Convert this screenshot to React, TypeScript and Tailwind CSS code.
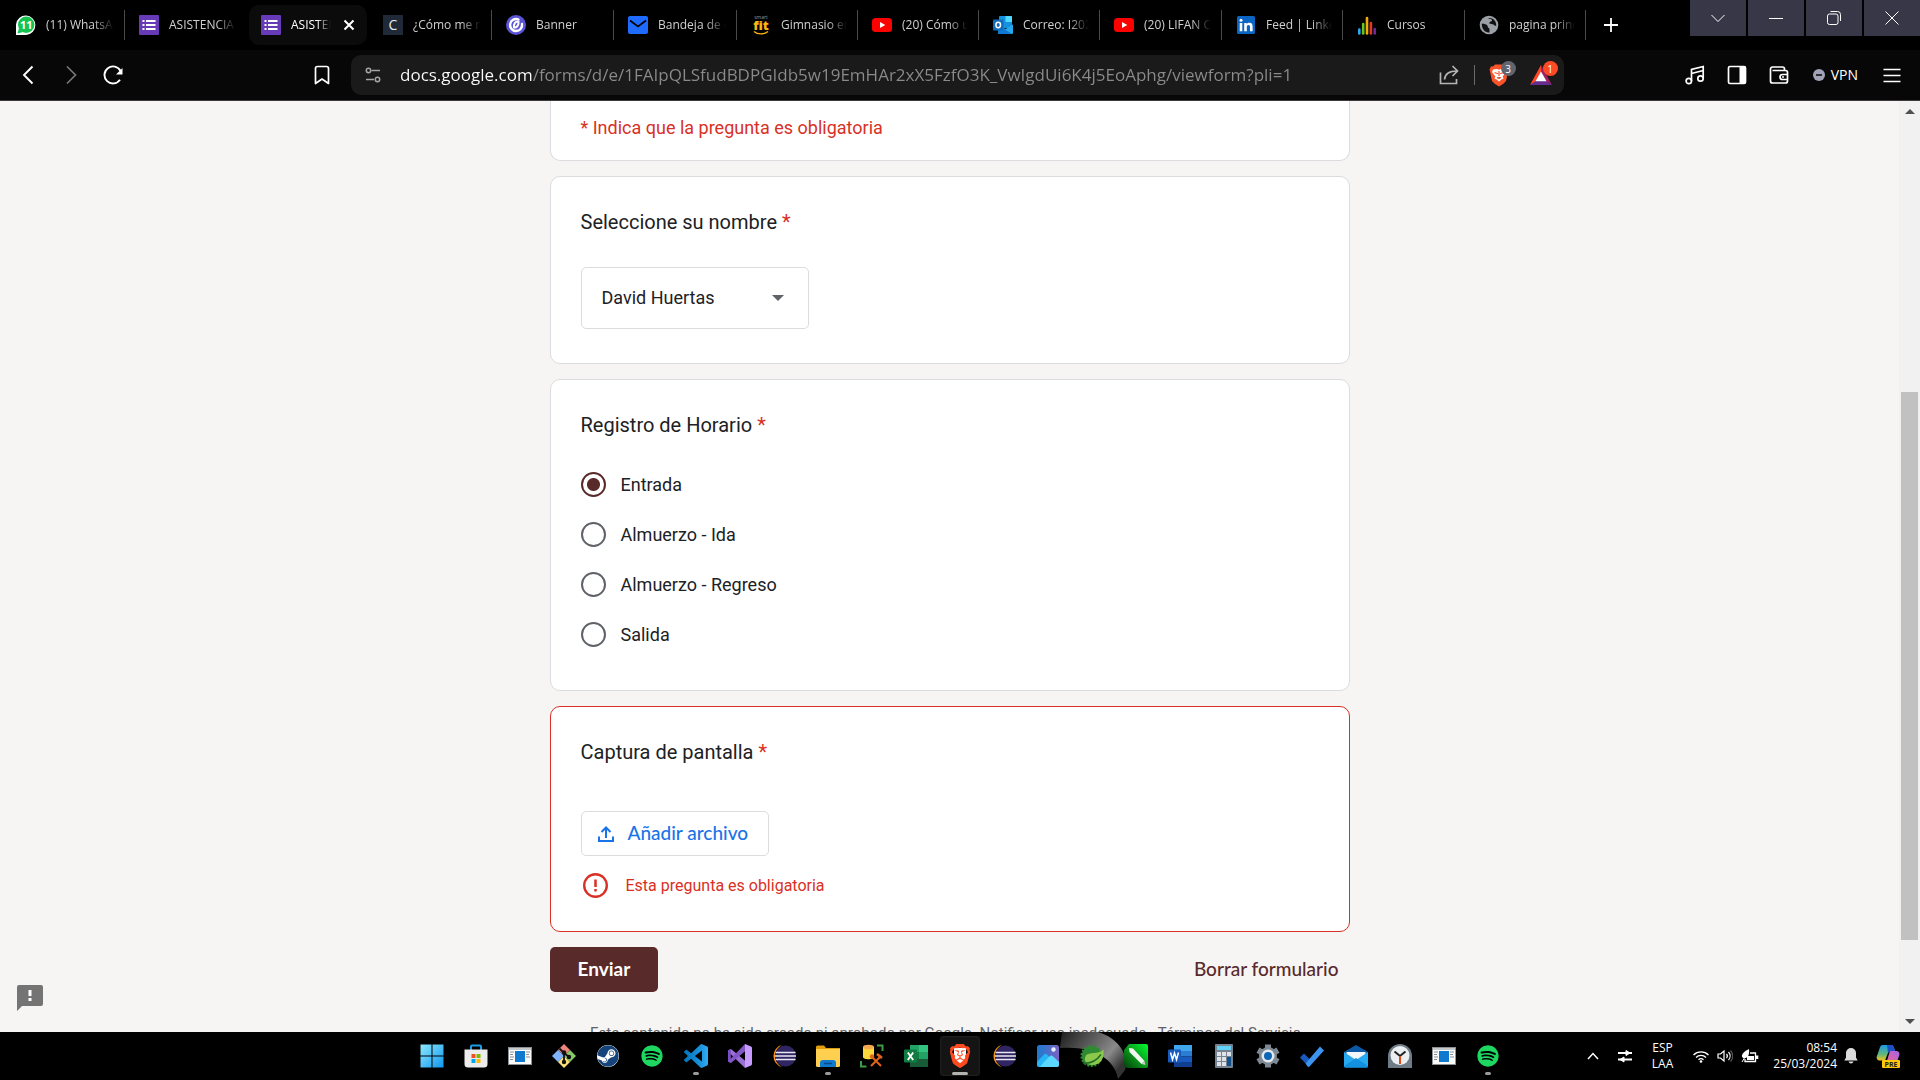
import { useState, type ReactNode } from "react";
import { FaSpotify, FaSteam } from "react-icons/fa";
import { SiBrave } from "react-icons/si";

/* ---------- tab favicons ---------- */

const WhatsAppTab = () => (
  <svg viewBox="0 0 20 20" className="size-5">
    <path d="M0 20V9.500A9.700 9.700 0 1 1 10 20Z" fill="#fff" />
    <circle cx="10.200" cy="9.800" r="8.200" fill="#16c350" />
    <path d="M1.500 18.500 3 13l4 4Z" fill="#16c350" />
    <text x="10.200" y="14" fontSize="11" fontWeight="700" textAnchor="middle" fill="#fff" fontFamily="Open Sans">11</text>
  </svg>
);

const FormsTab = () => (
  <svg viewBox="0 0 20 20" className="size-5">
    <rect width="20" height="20" rx="1" fill="#673ab7" />
    <path d="M3.500 5h2v2h-2zM3.500 9h2v2h-2zM3.500 13h2v2h-2zM7 5h9.500v2H7zM7 9h9.500v2H7zM7 13h9.500v2H7z" fill="#fff" />
  </svg>
);

const ComoTab = () => (
  <span className="flex size-5 items-center justify-center bg-[#1f2937] text-sm leading-5 text-gray-200">C</span>
);

const BannerTab = () => (
  <svg viewBox="0 0 20 20" className="size-5">
    <circle cx="10" cy="10" r="10" fill="#5a55d6" />
    <path d="M12.500 4.500A6 6 0 1 0 16 9" fill="none" stroke="#fff" strokeWidth="2.400" strokeLinecap="round" />
    <path d="M8 12.500c3 .5 5-3 4.500-6C9.500 6 7.500 8.500 8 12.500Z" fill="none" stroke="#fff" strokeWidth="2" />
  </svg>
);

const MailTab = () => (
  <svg viewBox="0 0 20 20" className="size-5">
    <rect y="1" width="20" height="18" rx="2" fill="#1f6bff" />
    <path d="m2 5.500 8 6 8-6" fill="none" stroke="#000" strokeWidth="1.600" />
  </svg>
);

const FitTab = () => (
  <svg viewBox="0 0 20 20" className="size-5">
    <text x="10" y="3.500" fontSize="5" textAnchor="middle" fill="#9a9a9a" fontFamily="Open Sans">smart</text>
    <text x="10" y="15" fontSize="13" fontWeight="800" textAnchor="middle" fill="#fbb615" fontFamily="Open Sans">fit</text>
    <path d="M3 16.500c3.500 3.200 10.500 3.200 14 0" fill="none" stroke="#fbb615" strokeWidth="1.400" />
  </svg>
);

const YouTubeTab = () => (
  <svg viewBox="0 0 20 20" className="size-5">
    <rect y="3" width="20" height="14" rx="3.500" fill="#f00" />
    <path d="m8 7 5.300 3L8 13Z" fill="#fff" />
  </svg>
);

const OutlookTab = () => (
  <svg viewBox="0 0 20 20" className="size-5">
    <rect x="6" y="1" width="13" height="12" rx="1" fill="#1490df" />
    <path d="M12.500 1H18a1 1 0 0 1 1 1v5h-6.500z" fill="#50d9ff" />
    <path d="M5 9.500 12.500 14 20 9.500V18a1 1 0 0 1-1 1H6a1 1 0 0 1-1-1Z" fill="#28a8ea" />
    <path d="M5 10v8a1 1 0 0 0 1 1h13Z" fill="#0f78d4" />
    <rect y="4.500" width="10.500" height="11" rx="1" fill="#0f6cbd" />
    <ellipse cx="5.200" cy="10" rx="2.300" ry="2.700" fill="none" stroke="#fff" strokeWidth="1.500" />
  </svg>
);

const CursosTab = () => (
  <svg viewBox="0 0 20 20" className="size-5">
    <g strokeWidth="2.600" strokeLinecap="round">
      <path d="M2.300 14.500v4" stroke="#2aa8f2" />
      <path d="M6.200 9v9.500" stroke="#66c61c" />
      <path d="M10 3v15.500" stroke="#f5a80b" />
      <path d="M13.900 8v10.500" stroke="#e5391f" />
      <path d="M17.700 14v4.500" stroke="#6b2aa0" />
    </g>
  </svg>
);

const GlobeTab = () => (
  <svg viewBox="0 0 20 20" className="size-5">
    <circle cx="10" cy="10" r="9.300" fill="#9aa0a6" />
    <path d="M2.800 8.500c3 .3 5.800 1 6 3.200.1 1.300 1.700 1 1.700 2.500v3.200c-4.600.4-8-3.600-7.700-8.900ZM9 3c1.500 1.500 3.500.5 4 2.200.3 1.300-2.600 1.200-2.600 2.800 0 1.200 1.500 1 3.200 1.200 1.500.3 1.900 1.800 3.600 1.600.4-4.800-3.300-8.500-8.200-7.800Z" fill="#111" />
  </svg>
);

const LinkedInTab = () => (
  <svg viewBox="0 0 20 20" className="size-5">
    <rect x="1" y="1" width="18" height="18" rx="1.500" fill="#0a66c2" />
    <path d="M3.700 8h2.600v8.300H3.700zM8.200 8h2.500v1.200c.5-.9 1.500-1.400 2.700-1.400 2.400 0 3.200 1.500 3.200 3.900v4.600H14v-4.200c0-1.300-.3-2.100-1.500-2.100s-1.700.9-1.700 2.200v4.100H8.200z" fill="#fff" />
    <circle cx="5" cy="5.200" r="1.500" fill="#fff" />
  </svg>
);

type Tab = { title: string; icon: ReactNode; width: string; active?: boolean; bare?: boolean };

const tabs: Tab[] = [
  { title: "(11) WhatsApp", icon: <WhatsAppTab />, width: "w-[123px]" },
  { title: "ASISTENCIA", icon: <FormsTab />, width: "w-[122px]", bare: true },
  { title: "ASISTENCIA", icon: <FormsTab />, width: "w-[122px]", active: true, bare: true },
  { title: "¿Cómo me registro?", icon: <ComoTab />, width: "w-[123px]" },
  { title: "Banner", icon: <BannerTab />, width: "w-[122px]" },
  { title: "Bandeja de entrada", icon: <MailTab />, width: "w-[123px]" },
  { title: "Gimnasio en Lima", icon: <FitTab />, width: "w-[121px]" },
  { title: "(20) Cómo usar", icon: <YouTubeTab />, width: "w-[121px]" },
  { title: "Correo: I202110", icon: <OutlookTab />, width: "w-[121px]" },
  { title: "(20) LIFAN CHILE", icon: <YouTubeTab />, width: "w-[122px]" },
  { title: "Feed | LinkedIn", icon: <LinkedInTab />, width: "w-[121px]" },
  { title: "Cursos", icon: <CursosTab />, width: "w-[122px]" },
  { title: "pagina principal", icon: <GlobeTab />, width: "w-[121px]" },
];

function TabItem({ tab }: { tab: Tab }) {
  if (tab.active) {
    return (
      <div className={`${tab.width} flex h-10 shrink items-center px-0.5`}>
        <div className="flex h-10 w-full items-center rounded-[10px] bg-[#0b0b0b] pr-3 pl-3">
          <button className="flex min-w-0 flex-1 items-center gap-2.5 text-left text-white">
            <span className="shrink-0">{tab.icon}</span>
            <span className="min-w-0 flex-1 overflow-hidden whitespace-nowrap [mask-image:linear-gradient(to_right,black_65%,transparent)]">{tab.title}</span>
          </button>
          <button aria-label="Cerrar pestaña" className="ml-3 shrink-0 text-white">
            <svg viewBox="0 0 12 12" className="size-3"><path d="m1.500 1.500 9 9m0-9-9 9" stroke="currentColor" strokeWidth="2" /></svg>
          </button>
        </div>
      </div>
    );
  }
  return (
    <div className={`${tab.width} flex h-[30px] shrink items-center border-r pr-2.5 pl-3.5 ${tab.bare ? "border-transparent" : "border-[#4a4a4a]"}`}>
      <button className="flex min-w-0 flex-1 items-center gap-2.5 text-left text-[#d0d0d0]">
        <span className="shrink-0">{tab.icon}</span>
        <span className="min-w-0 flex-1 overflow-hidden whitespace-nowrap [mask-image:linear-gradient(to_right,black_70%,transparent)]">{tab.title}</span>
      </button>
    </div>
  );
}

function TabStrip() {
  const win = "flex h-9 w-14 items-center justify-center bg-[#373747] text-white";
  return (
    <div className="flex h-[50px] items-start bg-black pl-0.5 text-xs">
      <div className="flex h-[50px] min-w-0 items-center">
        {tabs.map((t, i) => <TabItem key={i} tab={t} />)}
      </div>
      <button aria-label="Nueva pestaña" className="ml-[18px] flex h-[50px] items-center text-white">
        <svg viewBox="0 0 14 14" className="size-3.5"><path d="M7 0v14M0 7h14" stroke="currentColor" strokeWidth="1.800" /></svg>
      </button>
      <div className="ml-auto flex gap-0.5">
        <button aria-label="Buscar pestañas" className={win}>
          <svg viewBox="0 0 14 14" className="size-3.5"><path d="m.5 4 6.500 6.500L13.500 4" fill="none" stroke="currentColor" /></svg>
        </button>
        <button aria-label="Minimizar" className={win}>
          <svg viewBox="0 0 14 14" className="size-3.5"><path d="M0 7.500h14" stroke="currentColor" /></svg>
        </button>
        <button aria-label="Restaurar" className={win}>
          <svg viewBox="0 0 14 14" className="size-3.5"><path d="M3.500.5h7a3 3 0 0 1 3 3v6.500" fill="none" stroke="currentColor" /><rect x=".5" y="3" width="10.500" height="10.500" rx="2" fill="none" stroke="currentColor" /></svg>
        </button>
        <button aria-label="Cerrar" className={win}>
          <svg viewBox="0 0 14 14" className="size-3.5"><path d="m.5.5 13 13m0-13-13 13" stroke="currentColor" /></svg>
        </button>
      </div>
    </div>
  );
}

function Toolbar() {
  return (
    <div className="flex h-[51px] items-center border-b border-[#3c3a3c] bg-[#070707] pr-[18px] pl-[19px] text-white">
      <button aria-label="Atrás"><svg viewBox="0 0 20 20" className="size-5"><path d="m13.500 1.500-8.500 8.500 8.500 8.500" fill="none" stroke="currentColor" strokeWidth="1.900" /></svg></button>
      <button aria-label="Adelante" className="ml-[22px] text-[#777]"><svg viewBox="0 0 20 20" className="size-5"><path d="m6 1.500 8.500 8.500L6 18.500" fill="none" stroke="currentColor" strokeWidth="1.700" /></svg></button>
      <button aria-label="Recargar" className="ml-[22px]">
        <svg viewBox="0 0 20 20" className="size-5"><path d="M17 14.700A8.500 8.500 0 1 1 17.500 6" fill="none" stroke="currentColor" strokeWidth="1.900" /><path d="M19.500 3v6.500H13Z" fill="currentColor" /></svg>
      </button>
      <button aria-label="Guardar en marcadores" className="ml-[189px]">
        <svg viewBox="0 0 20 20" className="size-5"><path d="M3.500 18.500V3.500a2 2 0 0 1 2-2h9a2 2 0 0 1 2 2v15L10 14Z" fill="none" stroke="currentColor" strokeWidth="1.700" strokeLinejoin="round" /></svg>
      </button>
      <div className="ml-[19px] flex h-10 min-w-0 flex-1 items-center rounded-[10px] bg-[#1a1a1a] pl-3.5">
        <svg viewBox="0 0 16 16" className="size-4 shrink-0 text-[#a5a5a8]"><g fill="none" stroke="currentColor" strokeWidth="1.500"><circle cx="3.500" cy="3.500" r="2.200" /><path d="M6.500 3.500H15M1 12.500h8" /><circle cx="12.500" cy="12.500" r="2.200" /></g></svg>
        <input
          aria-label="Dirección"
          defaultValue="docs.google.com/forms/d/e/1FAIpQLSfudBDPGIdb5w19EmHAr2xX5FzfO3K_VwIgdUi6K4j5EoAphg/viewform?pli=1"
          className="ml-[19px] min-w-0 flex-1 bg-[linear-gradient(to_right,#fff_132px,#8b8b8b_132px)] bg-clip-text text-[17px] text-transparent outline-none"
        />
        <svg viewBox="0 0 20 20" className="size-5 shrink-0 text-[#b5b5b5]"><path d="M1.500 7.500v11h16V14" fill="none" stroke="currentColor" strokeWidth="1.700" /><path d="M5.500 14.500c.5-5.500 4-8.500 12.500-8.500M13.500 1l5 5-5 5" fill="none" stroke="currentColor" strokeWidth="1.700" /></svg>
        <span className="mr-3.5 ml-[15px] h-5 w-px shrink-0 bg-[#6a6a6a]" />
        <button aria-label="Brave Shields" className="relative h-6 w-5 shrink-0">
          <svg viewBox="0 0 20 24" className="h-6 w-5">
            <path d="M6 1.500h8l2 2 2-.3 1.500 3.300-.5 2L17 18l-3 3-4 2.500L6 21l-3-3L1 8.500l-.5-2L2 3.200l2 .3Z" fill="#fb542b" />
            <path d="M4 6.500 8 6l2 .8L12 6l4 .5 1 2.500-3.300 4.500.8 2-2 1-2.500 2-2.500-2-2-1 .8-2L3 9Z" fill="#fff" />
            <path d="M5.500 9.500 9 10.800M14.500 9.500 11 10.800M8 14.500l2 1 2-1M10 8v5" stroke="#fb542b" strokeWidth="1.200" />
          </svg>
          <span className="absolute -top-0.5 left-3 flex size-[15px] items-center justify-center rounded-full bg-[#62656f] text-[10px] leading-none">3</span>
        </button>
        <button aria-label="Brave Rewards" className="relative mr-[11px] ml-5 h-6 w-6 shrink-0">
          <svg viewBox="0 0 24 24" className="size-6"><path d="M12 2 1 22l6-3.500L12 9Z" fill="#ff4724" /><path d="m12 2 11 20-6-3.500L12 9Z" fill="#9e1f63" /><path d="m1 22 6-4h10l6 4Z" fill="#662d91" /><path d="m12 8.500 5.500 9.800h-11Z" fill="#fff" /></svg>
          <span className="absolute -top-0.5 left-3.5 flex size-[15px] items-center justify-center rounded-full bg-[#ff4a26] text-[10px] leading-none">1</span>
        </button>
      </div>
      <button aria-label="Música" className="ml-[121px]"><svg viewBox="0 0 20 20" className="size-5"><g fill="none" stroke="currentColor" strokeWidth="1.700"><circle cx="3.800" cy="16" r="2.700" /><circle cx="15.500" cy="13.500" r="2.700" /><path d="M6.500 16V4.500l11.700-3v12M6.500 8.500l11.700-3" /></g></svg></button>
      <button aria-label="Barra lateral" className="ml-[22px]"><svg viewBox="0 0 20 20" className="size-5"><rect x="1.500" y="1.500" width="17" height="17" rx="1.500" fill="none" stroke="currentColor" strokeWidth="1.700" /><path d="M12.500 1.500h6v17h-6z" fill="currentColor" /></svg></button>
      <button aria-label="Cartera" className="ml-[22px]"><svg viewBox="0 0 20 20" className="size-5"><g fill="none" stroke="currentColor" strokeWidth="1.700" strokeLinejoin="round"><path d="M15.500 5.500V4a2 2 0 0 0-2-2h-10a2 2 0 0 0-2 2v12a2 2 0 0 0 2 2h13a2 2 0 0 0 2-2V7.500a2 2 0 0 0-2-2h-13" /><path d="M18.500 9.500h-5a2.500 2.500 0 0 0 0 5h5" /></g><circle cx="14" cy="12" r="1" fill="currentColor" /></svg></button>
      <button className="ml-6 flex items-center gap-1.5 text-sm"><svg viewBox="0 0 12 12" className="size-3"><circle cx="6" cy="6" r="6" fill="#a1a2b8" /><path d="M3 6h6" stroke="#111" strokeWidth="1.600" /></svg>VPN</button>
      <button aria-label="Menú" className="ml-6"><svg viewBox="0 0 20 20" className="size-5"><path d="M1.500 4.500h17M1.500 10.500h17M1.500 16.500h17" stroke="currentColor" strokeWidth="1.700" /></svg></button>
    </div>
  );
}

/* ---------- form ---------- */

const Req = () => <span className="text-[#d93025]">*</span>;

function Card({ title, error, children, id }: { title: string; error?: boolean; children: ReactNode; id: string }) {
  return (
    <section aria-labelledby={id} className={`mt-[15px] rounded-[10px] border bg-white px-[30px] pt-[30px] ${error ? "border-[#d93025]" : "border-[#dadce0]"}`}>
      <h2 id={id} className="text-xl leading-[30px] font-normal text-[#202124]">{title} <Req /></h2>
      {children}
    </section>
  );
}

const options = ["Entrada", "Almuerzo - Ida", "Almuerzo - Regreso", "Salida"];

function FormPage() {
  const [time, setTime] = useState("Entrada");
  return (
    <main className="flex min-h-0 flex-1 overflow-hidden bg-[#f6f5f4] font-['Roboto',sans-serif]">
      <div className="relative min-w-0 flex-1 overflow-hidden">
        <form className="mx-auto max-w-[800px]" onSubmit={(e) => e.preventDefault()}>
          <div className="rounded-b-[10px] border border-t-0 border-[#dadce0] bg-white px-[30px] pt-[15px] pb-5 text-lg leading-6 text-[#d93025]">
            * Indica que la pregunta es obligatoria
          </div>

          <Card id="q-nombre" title="Seleccione su nombre">
            <div className="mt-[30px] mb-[34px] grid w-[228px] items-center">
              <select aria-labelledby="q-nombre" className="col-start-1 row-start-1 h-[62px] appearance-none rounded-[5px] border border-[#dadce0] bg-white px-5 text-lg text-[#202124]">
                <option>David Huertas</option>
              </select>
              <svg viewBox="0 0 12 6" className="pointer-events-none col-start-1 row-start-1 mr-[25px] h-1.5 w-3 justify-self-end"><path d="M0 0h12L6 6Z" fill="#5f6368" /></svg>
            </div>
          </Card>

          <Card id="q-horario" title="Registro de Horario">
            <div role="radiogroup" aria-labelledby="q-horario" className="mt-8 mb-[43px] flex flex-col items-start gap-[25px]">
              {options.map((o) => (
                <label key={o} className="flex h-[25px] items-center gap-[15px] text-lg leading-6 text-[#202124]">
                  <input
                    type="radio"
                    name="horario"
                    checked={time === o}
                    onChange={() => setTime(o)}
                    className="size-[25px] appearance-none rounded-full border-2 border-[#5f6368] checked:border-[#582a2a] checked:bg-[radial-gradient(circle,#582a2a_6px,transparent_7px)]"
                  />
                  {o}
                </label>
              ))}
            </div>
          </Card>

          <Card id="q-captura" title="Captura de pantalla" error>
            <button className="mt-11 flex h-[45px] items-center gap-3.5 rounded-[5px] border border-[#dadce0] pr-5 pl-4 font-['Lato',sans-serif] text-[19px] font-medium text-[#1a73e8]">
              <svg viewBox="0 0 16 16" className="size-4"><path d="M1 10.500V15h14v-4.500M8 12V1.800M3.500 6 8 1.500 12.500 6" fill="none" stroke="currentColor" strokeWidth="2" /></svg>
              Añadir archivo
            </button>
            <div role="alert" className="mt-[17px] mb-[33px] flex h-[25px] items-center gap-[18px] pl-0.5 text-base text-[#d93025]">
              <svg viewBox="0 0 25 25" className="size-[25px]"><circle cx="12.500" cy="12.500" r="11.300" fill="none" stroke="currentColor" strokeWidth="2.400" /><path d="M12.500 6.500v7.500M12.500 16v2.500" stroke="currentColor" strokeWidth="2.500" /></svg>
              Esta pregunta es obligatoria
            </div>
          </Card>

          <div className="mt-[15px] flex h-[45px] items-center justify-between font-['Lato',sans-serif] text-[19px]">
            <button className="h-[45px] rounded-[5px] bg-[#582a2a] px-7 font-bold text-white">Enviar</button>
            <button type="button" className="pr-[11px] font-medium text-[#582a2a]">Borrar formulario</button>
          </div>

          <p className="mx-auto mt-[31px] max-w-[740px] text-center text-[15px] leading-5 text-[#5f6368]">
            Este contenido no ha sido creado ni aprobado por Google. <a href="#abuso">Notificar uso inadecuado</a> - <a href="#terminos">Términos del Servicio</a> -{" "}
            <a href="#privacidad">Política de Privacidad</a>
          </p>
        </form>
        <button aria-label="Informar de un problema a Google" className="absolute bottom-[21px] left-[17px]">
          <svg viewBox="0 0 26 26" className="size-[26px]"><path d="M2 0h22a2 2 0 0 1 2 2v17a2 2 0 0 1-2 2H5l-5 5V2a2 2 0 0 1 2-2Z" fill="#747474" /><path d="M11.500 5h3v6h-3zM11.500 13h3v3h-3z" fill="#fff" /></svg>
        </button>
      </div>
      <div aria-hidden="true" className="flex w-[21px] flex-col items-center bg-[#f1f1f1]">
        <svg viewBox="0 0 10 5" className="mt-2 h-[5px] w-2.5"><path d="M0 5h10L5 0Z" fill="#505050" /></svg>
        <div className="flex min-h-0 w-[17px] flex-1 flex-col">
          <div className="flex-[277]" />
          <div className="flex-[545] bg-[#c1c1c1]" />
          <div className="flex-[79]" />
        </div>
        <svg viewBox="0 0 10 5" className="mb-2 h-[5px] w-2.5"><path d="M0 0h10L5 5Z" fill="#505050" /></svg>
      </div>
    </main>
  );
}

/* ---------- taskbar ---------- */

const WindowsIcon = () => (
  <svg viewBox="0 0 24 24" className="size-6">
    <defs><linearGradient id="win" x1="0" y1="0" x2="1" y2="1"><stop offset="0" stopColor="#8be9ff" /><stop offset="1" stopColor="#1196ee" /></linearGradient></defs>
    <path d="M.5.500h11v11H.500zM12.500.500h11v11h-11zM.500 12.500h11v11H.500zM12.500 12.500h11v11h-11z" fill="url(#win)" />
  </svg>
);

const StoreIcon = () => (
  <svg viewBox="0 0 24 24" className="size-6">
    <path d="M7 6V2.500a1 1 0 0 1 1-1h8a1 1 0 0 1 1 1V6" fill="none" stroke="#1c9be6" strokeWidth="2" />
    <path d="M.5 5.500h23V20a3.500 3.500 0 0 1-3.500 3.500H4A3.500 3.500 0 0 1 .5 20Z" fill="#ececec" />
    <path d="M7.500 10h4v4h-4z" fill="#f25022" /><path d="M12.500 10h4v4h-4z" fill="#7fba00" /><path d="M7.500 15h4v4h-4z" fill="#00a4ef" /><path d="M12.500 15h4v4h-4z" fill="#ffb900" />
  </svg>
);

const AppWindowIcon = () => (
  <svg viewBox="0 0 24 24" className="size-6">
    <path d="M0 3h24v18H0z" fill="#8c9196" /><path d="M1 6h22v14H1z" fill="#fafafa" />
    <path d="M1 4h22v2H1z" fill="#c5c9cc" />
    <path d="M7 7h10v11H7z" fill="#0f78cf" />
    <path d="M2 8h4M2 10.500h3M2 13h4M2 15.500h3M18 8h4M18 10.500h3M18 13h4" stroke="#8a8f94" />
  </svg>
);

const GitIcon = () => (
  <svg viewBox="0 0 24 24" className="size-6">
    <path d="m12 0 6 6-6 6-6-6Z" fill="#f0837b" /><path d="m18 6 6 6-6 6-6-6Z" fill="#87c966" /><path d="m6 6 6 6-6 6-6-6Z" fill="#80b3ff" /><path d="m12 12 6 6-6 6-6-6Z" fill="#ffe078" />
    <path d="m7.500 4.500 4.500 4.500v9M12 9l5 4" fill="none" stroke="#111" strokeWidth="1.800" /><circle cx="12" cy="8.500" r="2.200" fill="#111" /><circle cx="12" cy="18" r="2.200" fill="#111" /><circle cx="17" cy="13" r="2.200" fill="#111" />
  </svg>
);

const SteamIcon = () => <FaSteam className="size-6 rounded-full bg-white bg-clip-content p-px text-[#14447a]" />;

const SpotifyIcon = () => <FaSpotify className="size-6 rounded-full bg-black p-px text-[#1ed760]" />;

const VsCodeIcon = () => (
  <svg viewBox="0 0 24 24" className="size-6">
    <defs><linearGradient id="vsc"><stop offset="0" stopColor="#0073bc" /><stop offset=".7" stopColor="#1c93dc" /><stop offset="1" stopColor="#31acf5" /></linearGradient></defs>
    <path fill="url(#vsc)" d="M23.150 2.587 18.210.210a1.494 1.494 0 0 0-1.705.290l-9.460 8.630-4.120-3.128a.999.999 0 0 0-1.276.057L.327 7.261A1 1 0 0 0 .326 8.740L3.899 12 .326 15.260a1 1 0 0 0 .001 1.479L1.650 17.940a.999.999 0 0 0 1.276.057l4.120-3.128 9.460 8.630a1.492 1.492 0 0 0 1.704.290l4.942-2.377A1.500 1.500 0 0 0 24 20.060V3.939a1.500 1.500 0 0 0-.850-1.352zm-5.146 14.861L10.826 12l7.178-5.448v10.896z" />
  </svg>
);

const VisualStudioIcon = () => (
  <svg viewBox="0 0 24 24" className="size-6">
    <path d="M0 6.500 3 5l15 12.500L17 24 0 7.500Z" fill="#9a6fd8" /><path d="M0 6.500 2.800 5v14L0 17.500Z" fill="#7a4fc0" />
    <path d="M0 17.500 17 0l1 6.500L3 19Z" fill="#8257c5" /><path d="m17 0 6 2.500a2 2 0 0 1 1 1.500v16a2 2 0 0 1-1 1.500L17 24Z" fill="#c79bff" />
  </svg>
);

const EclipseIcon = () => (
  <svg viewBox="0 0 24 24" className="size-6">
    <path d="M10 .8a11.600 11.600 0 0 0 0 22.400C5 20 3 16 3 12S5 4 10 .8Z" fill="#f7941e" />
    <circle cx="13.500" cy="12" r="10.500" fill="#2f2560" />
    <path d="M3.500 8.500h20M3 12h21M3.500 15.500h20" stroke="#e8e6f2" strokeWidth="1.700" />
  </svg>
);

const FolderIcon = () => (
  <svg viewBox="0 0 24 24" className="size-6">
    <path d="M0 3a1.500 1.500 0 0 1 1.500-1.500H8L10 4h14v4H0Z" fill="#e09c0a" />
    <path d="M0 5h24v16.500a1.500 1.500 0 0 1-1.500 1.500h-21A1.500 1.500 0 0 1 0 21.500Z" fill="#ffd050" />
    <path d="M4 23v-4a3 3 0 0 1 3-3h10a3 3 0 0 1 3 3v4Z" fill="#0f78cf" /><path d="M8 19.500h8" stroke="#074a86" strokeWidth="1.500" />
  </svg>
);

const SqlIcon = () => (
  <svg viewBox="0 0 24 24" className="size-6">
    <path d="M3 3v10c0 3 11 3 11 0V3Z" fill="#fbd83c" /><ellipse cx="8.500" cy="3" rx="5.500" ry="2.300" fill="#f4a94e" />
    <path d="M17 1.500h5.500V7M1 17v5.500h5.500" fill="none" stroke="#3f9b46" strokeWidth="2" />
    <path d="m11 22 10-10M11 12l10 10" stroke="#e2641a" strokeWidth="2" /><circle cx="12" cy="12.500" r="2.200" fill="#e2641a" /><path d="m17 10 5 4" stroke="#e2641a" strokeWidth="2.600" />
  </svg>
);

const ExcelIcon = () => (
  <svg viewBox="0 0 24 24" className="size-6">
    <path d="M6 1h9v7H6z" fill="#21a366" /><path d="M15 1h9v7h-9z" fill="#33c481" /><path d="M6 8h9v7H6z" fill="#107c41" /><path d="M15 8h9v7h-9z" fill="#21a366" /><path d="M6 15h18v8H6z" fill="#185c37" />
    <rect y="5.500" width="13" height="13" rx="1" fill="#107c41" /><path d="m3.800 8.500 5.400 7.500M9.200 8.500 3.800 16" stroke="#fff" strokeWidth="1.900" />
  </svg>
);

const BraveIcon = () => (
  <span className="grid size-6 place-items-center">
    <span className="col-start-1 row-start-1 h-4 w-3 rounded-b-md bg-white" />
    <SiBrave className="col-start-1 row-start-1 size-6 text-[#ff4a20]" />
  </span>
);

const PhotosIcon = () => (
  <svg viewBox="0 0 24 24" className="size-6">
    <defs><linearGradient id="ph" x1="0" x2="1"><stop offset="0" stopColor="#1b7bd0" /><stop offset="1" stopColor="#7a63c0" /></linearGradient></defs>
    <rect x="1" y="1" width="22" height="22" rx="2.500" fill="url(#ph)" /><circle cx="17.500" cy="5.500" r="2.200" fill="#e6efff" />
    <path d="m1 18 7-7.500a2 2 0 0 1 3 0L22.500 22l-1 1h-18A2.500 2.500 0 0 1 1 20.500Z" fill="#27b5f5" /><path d="m8 18 6-6a2 2 0 0 1 2.600 0L23 18v2.500a2.500 2.500 0 0 1-2.500 2.500H4Z" fill="#5cd8ff" />
  </svg>
);

const SpringIcon = () => (
  <svg viewBox="0 0 24 24" className="size-6">
    <circle cx="11.500" cy="12" r="9.800" fill="#2f8a34" stroke="#2f8a34" strokeWidth="2.500" strokeDasharray="2 1.500" />
    <path d="M23.500 5.500C24.500 14 21 20.500 13 21c-7 .5-10-5-7-9.500C9 7.500 18 11 23.500 5.500Z" fill="#8cc84b" /><path d="M3 19c8 1 14-3 18-8.500" fill="none" stroke="#1f6e28" strokeWidth="1.500" />
  </svg>
);

const CorelIcon = () => (
  <svg viewBox="0 0 24 24" className="size-6">
    <defs><linearGradient id="cor" x1="1" y1="0" x2="0" y2="1"><stop offset="0" stopColor="#00ff30" /><stop offset=".5" stopColor="#0a9c1c" /><stop offset="1" stopColor="#043d0a" /></linearGradient></defs>
    <path d="M5 0h17a2 2 0 0 1 2 2v20a2 2 0 0 1-2 2H4a4 4 0 0 1-4-4V6Z" fill="url(#cor)" /><path d="m5 4 4 .5L20.500 17 17.500 20 5.500 8Z" fill="#f2f5f2" /><path d="m17.500 20 3-3 1 4Z" fill="#c6ccc6" />
  </svg>
);

const WordIcon = () => (
  <svg viewBox="0 0 24 24" className="size-6">
    <path d="M6 1h18v6H6z" fill="#41a5ee" /><path d="M6 7h18v5.500H6z" fill="#2b7cd3" /><path d="M6 12.500h18V18H6z" fill="#185abd" /><path d="M6 18h18v5H6z" fill="#103f91" />
    <rect y="5.500" width="13" height="13" rx="1" fill="#185abd" /><path d="m2.500 8.500 2 7 2-6.500 2 6.500 2-7" fill="none" stroke="#fff" strokeWidth="1.500" />
  </svg>
);

const CalcIcon = () => (
  <svg viewBox="0 0 24 24" className="size-6">
    <rect x="3" width="18" height="24" rx="1" fill="#76828e" /><path d="M5 2h14v4H5z" fill="#62d1f7" />
    <path d="M5 8h4v4H5zM10 8h4v4h-4zM15 8h4v4h-4zM5 13h4v4H5zM10 13h4v4h-4zM5 18h4v4H5zM10 18h4v4h-4z" fill="#dde3e8" /><path d="M15 13h4v9h-4z" fill="#11508d" />
  </svg>
);

const SettingsIcon = () => (
  <svg viewBox="0 0 24 24" className="size-6">
    <circle cx="12" cy="12" r="9" fill="#7d8893" /><g stroke="#7d8893" strokeWidth="6"><path d="M12 .5v23M2 6.200l20 11.600M2 17.800 22 6.200" /></g>
    <circle cx="12" cy="12" r="6.500" fill="#e6e9ec" /><circle cx="12" cy="12" r="4" fill="#0d65b5" />
  </svg>
);

const TodoIcon = () => (
  <svg viewBox="0 0 24 24" className="size-6"><path d="M0 13.500 4 9.500l6 6-4.500 4Z" fill="#185abd" /><path d="m5.500 19.500 14.500-17L24 6.500 9.500 22.500a1.500 1.500 0 0 1-2 0Z" fill="#3d94ee" /></svg>
);

const MailIcon = () => (
  <svg viewBox="0 0 24 24" className="size-6"><path d="m0 8 12-7 12 7v6H0Z" fill="#0b59a4" /><path d="M2.500 8h19v9h-19z" fill="#f5f8fa" /><path d="m0 8 12 8 12-8v14a1.500 1.500 0 0 1-1.500 1.500h-21A1.500 1.500 0 0 1 0 22Z" fill="#28aaf0" /><path d="m0 22 12-8 12 8v0a1.500 1.500 0 0 1-1.500 1.500h-21Z" fill="#1390df" /></svg>
);

const ClockIcon = () => (
  <svg viewBox="0 0 24 24" className="size-6"><path d="M0 12A12 12 0 0 1 24 12v12H0Z" fill="#6f7b86" /><circle cx="12" cy="11.500" r="9.500" fill="#eceff1" /><path d="m6.500 7.500 5.500 4.500 5.500-4.500" fill="none" stroke="#222" strokeWidth="2" /><path d="M12 12v8" stroke="#e04a1b" strokeWidth="2" /></svg>
);

type App = { name: string; icon: ReactNode; state?: "open" | "active" };

const apps: App[] = [
  { name: "Inicio", icon: <WindowsIcon /> },
  { name: "Microsoft Store", icon: <StoreIcon /> },
  { name: "Ejecutar", icon: <AppWindowIcon /> },
  { name: "Git", icon: <GitIcon /> },
  { name: "Steam", icon: <SteamIcon /> },
  { name: "Spotify", icon: <SpotifyIcon /> },
  { name: "Visual Studio Code", icon: <VsCodeIcon />, state: "open" },
  { name: "Visual Studio", icon: <VisualStudioIcon /> },
  { name: "Eclipse", icon: <EclipseIcon /> },
  { name: "Explorador de archivos", icon: <FolderIcon />, state: "open" },
  { name: "SQL Server", icon: <SqlIcon /> },
  { name: "Excel", icon: <ExcelIcon /> },
  { name: "Brave", icon: <BraveIcon />, state: "active" },
  { name: "Eclipse IDE", icon: <EclipseIcon /> },
  { name: "Fotos", icon: <PhotosIcon /> },
  { name: "Spring Tool Suite", icon: <SpringIcon /> },
  { name: "CorelDRAW", icon: <CorelIcon /> },
  { name: "Word", icon: <WordIcon /> },
  { name: "Calculadora", icon: <CalcIcon /> },
  { name: "Configuración", icon: <SettingsIcon /> },
  { name: "To Do", icon: <TodoIcon /> },
  { name: "Correo", icon: <MailIcon /> },
  { name: "Reloj", icon: <ClockIcon /> },
  { name: "Aplicación", icon: <AppWindowIcon /> },
  { name: "Spotify Música", icon: <SpotifyIcon />, state: "open" },
];

function AppButton({ app }: { app: App }) {
  return (
    <button aria-label={app.name} className="relative flex h-12 w-11 items-center justify-center">
      <span className={`flex size-10 items-center justify-center rounded ${app.state === "active" ? "bg-[#141414] ring-1 ring-[#1f1f1f] ring-inset" : ""}`}>{app.icon}</span>
      {app.state === "open" && <span className="absolute bottom-[5px] h-[3px] w-1.5 rounded-full bg-[#9a9a9a]" />}
      {app.state === "active" && <span className="absolute bottom-[5px] h-[3px] w-4 rounded-full bg-[#b5b3af]" />}
    </button>
  );
}

function Taskbar() {
  return (
    <footer className="grid h-12 grid-cols-[1fr_auto_1fr] items-center bg-black text-white">
      <nav aria-label="Barra de tareas" className="relative col-start-2 flex">
        <svg viewBox="0 0 74 48" className="absolute top-0 left-[650px] h-12 w-[74px]">
          <defs><linearGradient id="arc" x1="0" x2="1" y1="0" y2=".6"><stop offset="0" stopColor="#1c1c1c" /><stop offset=".75" stopColor="#8a8a8a" /><stop offset="1" stopColor="#333" /></linearGradient></defs>
          <path d="M2 0h36c20 6 31 22 27 38l-7 9C56 32 40 13 0 16Z" fill="url(#arc)" />
        </svg>
        {apps.map((a) => <AppButton key={a.name} app={a} />)}
      </nav>
      <div className="flex items-center justify-end pr-5">
        <button aria-label="Iconos ocultos"><svg viewBox="0 0 12 12" className="size-3"><path d="m1 9 5-5.500L11 9" fill="none" stroke="currentColor" strokeWidth="1.500" /></svg></button>
        <svg viewBox="0 0 14 14" className="ml-[19px] size-3.5"><path d="M0 4h14M0 10.500h14" stroke="currentColor" strokeWidth="1.800" /><path d="M8 1.500v5l4-2.500ZM6 8v5l-4-2.500Z" fill="currentColor" stroke="currentColor" /></svg>
        <button className="ml-5 text-center text-xs leading-4">ESP<br />LAA</button>
        <button aria-label="Red, volumen y batería" className="ml-5 flex items-center gap-2">
          <svg viewBox="0 0 16 16" className="size-4"><g fill="none" stroke="currentColor" strokeWidth="1.300"><path d="M.5 7a10.600 10.600 0 0 1 15 0M3 9.500a7 7 0 0 1 10 0M5.500 11.800a3.600 3.600 0 0 1 5 0" /></g><circle cx="8" cy="13.500" r="1.300" fill="currentColor" /></svg>
          <svg viewBox="0 0 16 16" className="size-4"><g fill="none" stroke="currentColor" strokeWidth="1.200"><path d="M1 6v4h2.500L7 13V3L3.500 6ZM9.500 6a3 3 0 0 1 0 4M11.500 4a6 6 0 0 1 0 8" /><path d="M13.500 2.500a8 8 0 0 1 0 11" stroke="#555" /></g></svg>
          <svg viewBox="0 0 18 16" className="h-4 w-[18px]"><path d="M9 5h5.500v8.500H4V11" fill="none" stroke="currentColor" strokeWidth="1.300" /><path d="M15 7.500h2.300V11H15z" fill="currentColor" /><path d="M6 8h7v4H6z" fill="currentColor" /><path d="M8 1c.5 5-.5 9-4.500 9S-.5 5 8 1Z" fill="currentColor" /><path d="M1 14 5.500 6.500" stroke="currentColor" /></svg>
        </button>
        <time dateTime="2024-03-25T08:54" className="ml-3.5 text-right text-xs leading-4">08:54<br />25/03/2024</time>
        <button aria-label="Notificaciones" className="ml-[7px]"><svg viewBox="0 0 14 16" className="h-4 w-3.5 text-[#dcdcdc]"><path d="M7 0a5 5 0 0 0-5 5v4.500L.3 12.500h13.400L12 9.500V5a5 5 0 0 0-5-5ZM4.500 13.500a2.600 2.600 0 0 0 5 0Z" fill="currentColor" /></svg></button>
        <button aria-label="Copilot" className="ml-[18px]">
          <svg viewBox="0 0 24 24" className="size-6">
            <defs>
              <linearGradient id="cpa" x1="0" x2="0" y1="0" y2="1"><stop offset="0" stopColor="#1c9be8" /><stop offset=".6" stopColor="#5fb77a" /><stop offset="1" stopColor="#f2c21f" /></linearGradient>
              <linearGradient id="cpb" x1="1" x2="0" y1="0" y2="1"><stop offset="0" stopColor="#a562e8" /><stop offset="1" stopColor="#f2688a" /></linearGradient>
            </defs>
            <path d="M7 1h8a3 3 0 0 1 2.800 2L19 7h-4a3 3 0 0 0-3 2l-3 7.500H3.500A3 3 0 0 1 .8 12.500L4 3.200A3 3 0 0 1 7 1Z" fill="url(#cpa)" />
            <path d="M14 7h6.500a3 3 0 0 1 2.800 4l-3 9H10l3-10Z" fill="url(#cpb)" /><path d="M11 1h4a3 3 0 0 1 2.800 2L19 7h-4a3 3 0 0 0-3 2Z" fill="#1b4fc4" />
            <rect x="6" y="16" width="18" height="8" rx="1" fill="#ffc80a" /><text x="15" y="22.500" fontSize="7" fontWeight="700" textAnchor="middle" fill="#222" fontFamily="Open Sans">PRE</text>
          </svg>
        </button>
      </div>
    </footer>
  );
}

export default function App() {
  return (
    <div className="flex h-screen flex-col overflow-hidden bg-black font-['Open_Sans',sans-serif]">
      <header>
        <TabStrip />
        <Toolbar />
      </header>
      <FormPage />
      <Taskbar />
    </div>
  );
}
